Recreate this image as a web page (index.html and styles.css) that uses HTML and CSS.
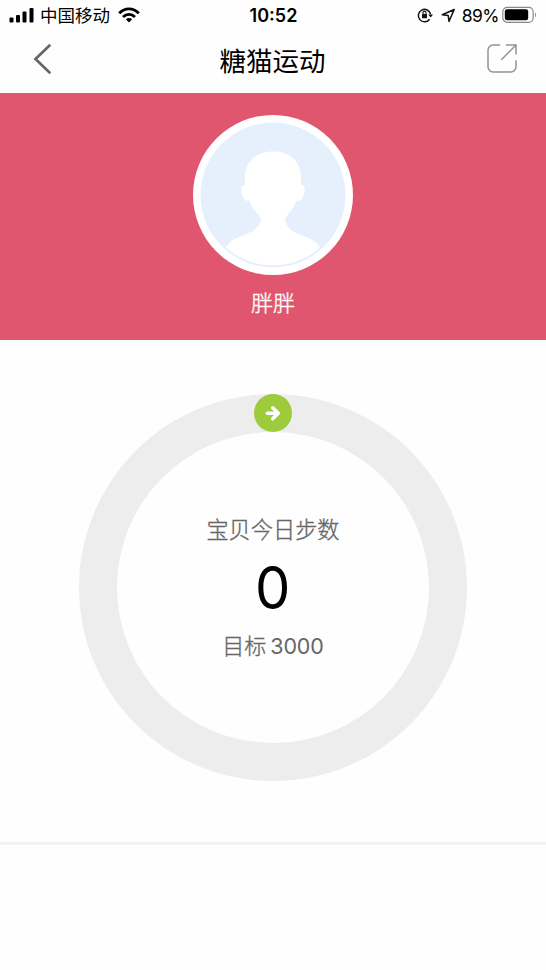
FILE: index.html
```html
<!DOCTYPE html>
<html lang="zh-CN">
<head>
<meta charset="utf-8">
<title>糖猫运动</title>
<link rel="stylesheet" href="styles.css">
</head>
<body>
<div class="status">
  <div class="status-left">
    <svg class="signal" width="26" height="16" viewBox="0 0 26 16"><rect x="0.5" y="10.5" width="4" height="5" rx="1"/><rect x="7" y="8" width="4" height="7.5" rx="1"/><rect x="13.5" y="4.5" width="4" height="11" rx="1"/><rect x="20.5" y="1" width="4" height="14.5" rx="1"/></svg>
    <span class="carrier">中国移动</span>
    <svg class="wifi" width="22" height="16" viewBox="0 0 22 16" fill="none" stroke="#000" stroke-width="2.9"><path d="M1.2 6.2C6.8.4 15.2.4 20.8 6.2M5 10C8.6 6.6 13.4 6.6 17 10"/><path d="M7.8 12.3Q11 9.8 14.2 12.3L11 15.6Z" fill="#000" stroke="none"/></svg>
  </div>
  <div class="time">10:52</div>
  <div class="status-right">
    <svg class="lock" width="17" height="16" viewBox="0 0 17 16" fill="none" stroke="#111" stroke-width="1.5"><path d="M12.6 12.2A6.2 6.2 0 1 1 13.6 7.2"/><path d="M11.2 7.4H16L13.7 10.6Z" fill="#111" stroke="none"/><rect x="5" y="7" width="5" height="4.2" rx=".6" fill="#111" stroke="none"/><path d="M6 7.200V5.600a1.500 1.500 0 0 1 3 0V7.200" stroke-width="1.1"/></svg>
    <svg class="locate" width="15" height="15" viewBox="0 0 15 15" fill="none" stroke="#111" stroke-width="1.5" stroke-linejoin="round"><path d="M13.2 1.5L1.3 6.8L7.2 7.5L8 13.4Z"/></svg>
    <span class="percent">89%</span>
    <svg class="battery" width="36" height="18" viewBox="0 0 36 18"><rect x=".8" y="1.3" width="30.4" height="15" rx="4.5" fill="none" stroke="#888" stroke-width="1.2"/><rect x="2.8" y="3.3" width="23.4" height="11" rx="2.3"/><path d="M33 6.2q2 2.6 0 5.2Z" fill="#888"/></svg>
  </div>
</div>
<header class="nav">
  <svg class="back" width="20" height="32" viewBox="0 0 20 32" fill="none" stroke="#666" stroke-width="2.7"><path d="M17.3 1.7L2.5 16L17.3 30.3"/></svg>
  <h1>糖猫运动</h1>
  <svg class="share" width="32" height="32" viewBox="0 0 32 32" fill="none" stroke="#929292" stroke-width="1.5"><path d="M14.2 2H7.2a5.2 5.2 0 0 0-5.2 5.2v16.6A5.2 5.2 0 0 0 7.2 29h17.600a5.2 5.2 0 0 0 5.2-5.2V17.2M20 2H30V11.5M29.8 2.2L15.3 16.7"/></svg>
</header>
<section class="profile">
  <svg class="avatar" width="160" height="160" viewBox="0 0 160 160">
    <defs><clipPath id="face"><circle cx="80" cy="79" r="71.3"/></clipPath></defs>
    <circle cx="80" cy="80" r="80" fill="#fff"/>
    <circle cx="80" cy="80" r="72.5" fill="#e6f0fd"/>
    <path clip-path="url(#face)" fill="#fff" d="M80 36.5C63 36.5 52 47 52 62V70C48 69.5 47.5 74 49 79C50.5 85 53 86.5 56.5 85.5C58.5 92 63 97 67 102C68.5 105 67.5 107 66 110C62 116 54 119 46 122C38 125 34 129 31 136L44 160H116L129 136C126 129 121 125 113 122C105 119 97 116 94 110C92.5 107 91.5 105 93 102C97 97 101.5 92 103.5 85.5C107 86.5 109.5 85 111 79C112.5 74 112 69.5 108 70V62C108 47 97 36.5 80 36.5Z"/>
  </svg>
  <div class="name">胖胖</div>
</section>
<main class="steps">
  <div class="ring">
    <div class="label">宝贝今日步数</div>
    <div class="count">0</div>
    <div class="goal"><span>目标</span><span class="number">3000</span></div>
    <svg class="marker" width="38" height="38" viewBox="0 0 38 38"><circle cx="19" cy="19" r="19" fill="#9dcb3c"/><path d="M13.3 19.3H24M18.7 13.8L24.3 19.3L18.7 24.8" fill="none" stroke="#fff" stroke-width="3.5" stroke-linecap="round" stroke-linejoin="round"/></svg>
  </div>
</main>
<hr class="divider">
</body>
</html>
```
FILE: styles.css
```css
* { box-sizing: border-box; }
body {
  margin: 0;
  height: 970px;
  overflow: hidden;
  background: #fefefe;
  color: #000;
  font-family: Inter, "Noto Sans CJK SC", sans-serif;
}
svg { display: block; flex: none; }
.status {
  display: grid;
  grid-template-columns: 1fr auto 1fr;
  align-items: center;
  height: 30px;
  padding: 0 8px 0 9px;
}
.status-left, .status-right { display: flex; align-items: center; }
.status-right { justify-content: flex-end; }
.signal { margin-top: -2px; }
.carrier { margin-left: 5px; font-size: 17.5px; line-height: 30px; }
.wifi { margin: -1px 0 0 8px; }
.time { font-size: 18px; font-weight: 600; line-height: 30px; padding-top: 1px; }
.lock { margin-top: -1px; }
.locate { margin-left: 7px; }
.percent { margin-left: 6px; font-size: 17.5px; letter-spacing: -.5px; line-height: 30px; }
.battery { margin: -2px 0 0 3px; }
.nav {
  display: grid;
  grid-template-columns: 1fr auto 1fr;
  align-items: center;
  height: 63px;
  padding: 0 28px 5px 33px;
}
.nav h1 {
  margin: 3px 0 0 -6px;
  font-size: 26.5px;
  font-weight: 400;
  line-height: 40px;
}
.share { justify-self: end; }
.profile {
  display: flex;
  flex-direction: column;
  align-items: center;
  height: 247px;
  padding-top: 22px;
  background: #e0566e;
}
.name {
  margin-top: 12px;
  color: #fff;
  font-size: 22px;
  font-weight: 300;
  line-height: 32px;
  -webkit-text-stroke: .35px currentColor;
}
.steps { display: flex; justify-content: center; padding-top: 54px; height: 502px; }
.ring {
  position: relative;
  display: flex;
  flex-direction: column;
  align-items: center;
  width: 388px;
  height: 387px;
  padding-top: 82px;
  border: 38px solid #ededed;
  border-radius: 50%;
  color: #666;
}
.label {
  font-size: 22.2px;
  font-weight: 300;
  line-height: 32px;
  -webkit-text-stroke: .35px currentColor;
}
.count {
  margin-top: 7px;
  color: #000;
  font-size: 59px;
  line-height: 70px;
  transform: scaleX(.95);
}
.goal {
  display: flex;
  gap: 4px;
  margin-top: 7px;
  font-size: 22px;
  font-weight: 300;
  line-height: 32px;
  -webkit-text-stroke: .35px currentColor;
}
.number { font-size: 21.5px; font-weight: 400; letter-spacing: -.1px; -webkit-text-stroke: 0; }
.marker { position: absolute; top: -38px; left: 137px; }
.divider { margin: 0; border: 0; height: 3px; background: #f2f2f2; }
```
